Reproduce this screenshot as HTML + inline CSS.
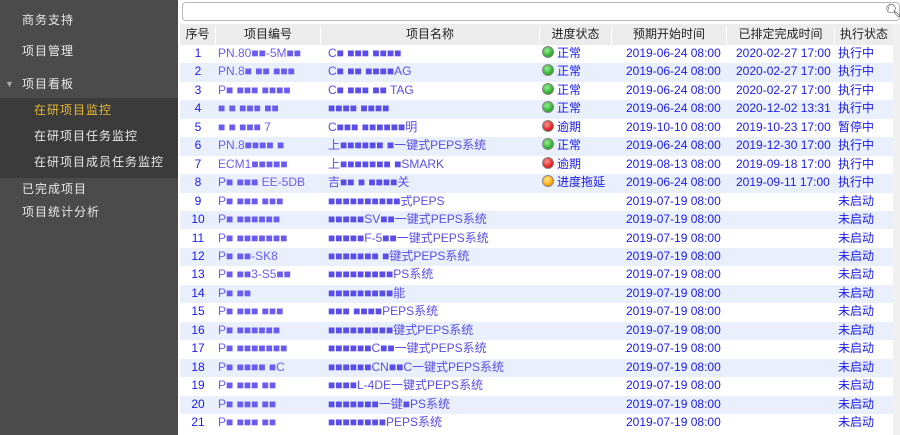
<!DOCTYPE html>
<html><head><meta charset="utf-8">
<style>
body{margin:0;width:900px;height:435px;overflow:hidden;background:#fff;font-family:"Liberation Sans","Noto Sans CJK SC",sans-serif;font-size:12px;position:relative}
.side{position:absolute;left:0;top:0;width:178px;height:435px;background:#4b4b4b;color:#e8e8e8}
.side div{position:absolute;left:22px;font-size:12px;letter-spacing:1px;line-height:16px}
.side div.sel{left:0;top:98px;width:178px;height:80px;background:#3b3b3b}
.search{position:absolute;left:182px;top:2px;width:716px;height:17px;border:1px solid #b8b8b8;border-radius:4px;background:#fff}
.hdr{position:absolute;left:180px;top:24px;width:713px;height:21px;background:#ececec;border-bottom:1px solid #d8d8d8}
.c{position:absolute;white-space:nowrap;overflow:hidden;line-height:15px}
.hdr .c{top:3px;text-align:center;color:#222;border-right:1px solid #fff;height:18px}
.row{position:absolute;left:180px;width:713px;height:18.45px;color:#1a1aee}
.row .c{top:1px}
.odd{background:#fff}.even{background:#e9f0fb}
.n{left:0;width:36px;text-align:center}
.b{left:38px;width:100px;color:#6b5cf0}
.m{left:148px;width:210px;color:#5a4de8}
.s{left:362px}
.d1{left:446px}.d2{left:556px}.x{left:658px}
.dot{display:inline-block;width:10px;height:10px;border-radius:50%;vertical-align:-1px;margin-right:3px;border:1px solid #888}
.g{background:radial-gradient(circle at 40% 35%,#9e9,#2a2 70%)}
.r{background:radial-gradient(circle at 40% 35%,#f99,#d11 70%)}
.y{background:radial-gradient(circle at 40% 35%,#fe8,#f90 70%)}
.sb{position:absolute;left:893px;top:24px;width:7px;height:411px;background:#f0f0f0}
</style></head><body>
<div class="side">
<div style="top:12px">商务支持</div>
<div style="top:43px">项目管理</div>
<div style="top:76px;left:5px;font-size:9px;color:#aaa">▼</div>
<div style="top:76px">项目看板</div>
<div class="sel"></div>
<div style="top:102px;left:34px;color:#e8b830">在研项目监控</div>
<div style="top:128px;left:34px">在研项目任务监控</div>
<div style="top:154px;left:34px">在研项目成员任务监控</div>
<div style="top:181px">已完成项目</div>
<div style="top:204px">项目统计分析</div>
</div>
<div class="search"></div>
<div style="position:absolute;left:885px;top:3px;font-size:13px;color:#333">&#x1F50D;&#xFE0E;</div>
<div class="hdr">
<div class="c" style="left:0;width:35px">序号</div>
<div class="c" style="left:36px;width:104px">项目编号</div>
<div class="c" style="left:141px;width:218px">项目名称</div>
<div class="c" style="left:360px;width:71px">进度状态</div>
<div class="c" style="left:432px;width:114px">预期开始时间</div>
<div class="c" style="left:547px;width:107px">已排定完成时间</div>
<div class="c" style="left:655px;width:58px">执行状态</div>
</div>
<div class="sb"></div>

<div class="row odd" style="top:45px"><div class="c n">1</div><div class="c b">PN.80■■-5M■■</div><div class="c m">C■ ■■■ ■■■■</div><div class="c s"><span class="dot g"></span>正常</div><div class="c d1">2019-06-24 08:00</div><div class="c d2">2020-02-27 17:00</div><div class="c x">执行中</div></div>
<div class="row even" style="top:63.45px"><div class="c n">2</div><div class="c b">PN.8■ ■■ ■■■</div><div class="c m">C■ ■■ ■■■■AG</div><div class="c s"><span class="dot g"></span>正常</div><div class="c d1">2019-06-24 08:00</div><div class="c d2">2020-02-27 17:00</div><div class="c x">执行中</div></div>
<div class="row odd" style="top:81.9px"><div class="c n">3</div><div class="c b">P■ ■■■ ■■■■</div><div class="c m">C■ ■■■ ■■ TAG</div><div class="c s"><span class="dot g"></span>正常</div><div class="c d1">2019-06-24 08:00</div><div class="c d2">2020-02-27 17:00</div><div class="c x">执行中</div></div>
<div class="row even" style="top:100.35px"><div class="c n">4</div><div class="c b">■ ■ ■■■ ■■</div><div class="c m">■■■■ ■■■■</div><div class="c s"><span class="dot g"></span>正常</div><div class="c d1">2019-06-24 08:00</div><div class="c d2">2020-12-02 13:31</div><div class="c x">执行中</div></div>
<div class="row odd" style="top:118.8px"><div class="c n">5</div><div class="c b">■ ■ ■■■ 7</div><div class="c m">C■■■ ■■■■■■明</div><div class="c s"><span class="dot r"></span>逾期</div><div class="c d1">2019-10-10 08:00</div><div class="c d2">2019-10-23 17:00</div><div class="c x">暂停中</div></div>
<div class="row even" style="top:137.25px"><div class="c n">6</div><div class="c b">PN.8■■■■ ■</div><div class="c m">上■■■■■■ ■一键式PEPS系统</div><div class="c s"><span class="dot g"></span>正常</div><div class="c d1">2019-06-24 08:00</div><div class="c d2">2019-12-30 17:00</div><div class="c x">执行中</div></div>
<div class="row odd" style="top:155.7px"><div class="c n">7</div><div class="c b">ECM1■■■■■</div><div class="c m">上■■■■■■■ ■SMARK</div><div class="c s"><span class="dot r"></span>逾期</div><div class="c d1">2019-08-13 08:00</div><div class="c d2">2019-09-18 17:00</div><div class="c x">执行中</div></div>
<div class="row even" style="top:174.15px"><div class="c n">8</div><div class="c b">P■ ■■■ EE-5DB</div><div class="c m">吉■■ ■ ■■■■关</div><div class="c s"><span class="dot y"></span>进度拖延</div><div class="c d1">2019-06-24 08:00</div><div class="c d2">2019-09-11 17:00</div><div class="c x">执行中</div></div>
<div class="row odd" style="top:192.6px"><div class="c n">9</div><div class="c b">P■ ■■■ ■■■</div><div class="c m">■■■■■■■■■■式PEPS</div><div class="c d1">2019-07-19 08:00</div><div class="c x">未启动</div></div>
<div class="row even" style="top:211.05px"><div class="c n">10</div><div class="c b">P■ ■■■■■■</div><div class="c m">■■■■■SV■■一键式PEPS系统</div><div class="c d1">2019-07-19 08:00</div><div class="c x">未启动</div></div>
<div class="row odd" style="top:229.5px"><div class="c n">11</div><div class="c b">P■ ■■■■■■■</div><div class="c m">■■■■■F-5■■一键式PEPS系统</div><div class="c d1">2019-07-19 08:00</div><div class="c x">未启动</div></div>
<div class="row even" style="top:247.95px"><div class="c n">12</div><div class="c b">P■ ■■-SK8</div><div class="c m">■■■■■■■ ■键式PEPS系统</div><div class="c d1">2019-07-19 08:00</div><div class="c x">未启动</div></div>
<div class="row odd" style="top:266.4px"><div class="c n">13</div><div class="c b">P■ ■■3-S5■■</div><div class="c m">■■■■■■■■■PS系统</div><div class="c d1">2019-07-19 08:00</div><div class="c x">未启动</div></div>
<div class="row even" style="top:284.85px"><div class="c n">14</div><div class="c b">P■ ■■</div><div class="c m">■■■■■■■■■能</div><div class="c d1">2019-07-19 08:00</div><div class="c x">未启动</div></div>
<div class="row odd" style="top:303.3px"><div class="c n">15</div><div class="c b">P■ ■■■ ■■■</div><div class="c m">■■■ ■■■■PEPS系统</div><div class="c d1">2019-07-19 08:00</div><div class="c x">未启动</div></div>
<div class="row even" style="top:321.75px"><div class="c n">16</div><div class="c b">P■ ■■■■■■</div><div class="c m">■■■■■■■■■键式PEPS系统</div><div class="c d1">2019-07-19 08:00</div><div class="c x">未启动</div></div>
<div class="row odd" style="top:340.2px"><div class="c n">17</div><div class="c b">P■ ■■■■■■■</div><div class="c m">■■■■■■C■■一键式PEPS系统</div><div class="c d1">2019-07-19 08:00</div><div class="c x">未启动</div></div>
<div class="row even" style="top:358.65px"><div class="c n">18</div><div class="c b">P■ ■■■■ ■C</div><div class="c m">■■■■■■CN■■C一键式PEPS系统</div><div class="c d1">2019-07-19 08:00</div><div class="c x">未启动</div></div>
<div class="row odd" style="top:377.1px"><div class="c n">19</div><div class="c b">P■ ■■■ ■■</div><div class="c m">■■■■L-4DE一键式PEPS系统</div><div class="c d1">2019-07-19 08:00</div><div class="c x">未启动</div></div>
<div class="row even" style="top:395.55px"><div class="c n">20</div><div class="c b">P■ ■■■ ■■</div><div class="c m">■■■■■■■一键■PS系统</div><div class="c d1">2019-07-19 08:00</div><div class="c x">未启动</div></div>
<div class="row odd" style="top:414px"><div class="c n">21</div><div class="c b">P■ ■■■ ■■</div><div class="c m">■■■■■■■■PEPS系统</div><div class="c d1">2019-07-19 08:00</div><div class="c x">未启动</div></div>
</body></html>
